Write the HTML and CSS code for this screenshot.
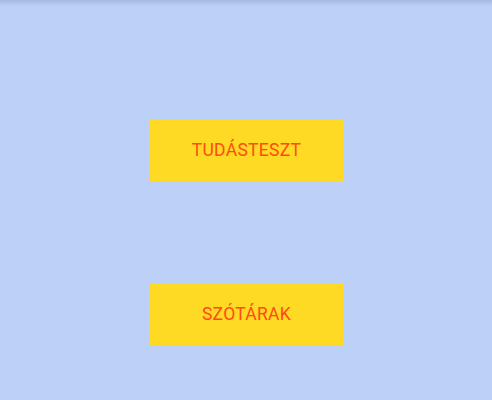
FILE: index.html
```html
<!DOCTYPE html>
<html>
<head>
<meta charset="utf-8">
<link rel="stylesheet" href="styles.css">
</head>
<body>
<div class="screen">
  <div class="shadow"></div>
  <div class="menu">
    <div class="btn">TUDÁSTESZT</div>
    <div class="btn">SZÓTÁRAK</div>
  </div>
</div>
</body>
</html>
```
FILE: styles.css
```css
html, body {
  margin: 0;
  padding: 0;
}
body {
  width: 492px;
  height: 400px;
  overflow: hidden;
  background: #bdd1f8;
  font-family: Roboto, "Liberation Sans", sans-serif;
}
.screen {
  position: relative;
  width: 492px;
  height: 400px;
}
.shadow {
  position: absolute;
  left: 0;
  top: 0;
  width: 100%;
  height: 6px;
  background: linear-gradient(to bottom, rgba(120,140,180,0.35), rgba(120,140,180,0));
}
.menu {
  display: flex;
  flex-direction: column;
  align-items: center;
  padding-top: 119px;
  gap: 102px;
  padding-left: 1px;
}
.btn {
  width: 193px;
  height: 62px;
  background: #ffda25;
  color: #ff4a10;
  font-size: 17.5px;
  display: flex;
  align-items: center;
  justify-content: center;
  letter-spacing: 0.3px;
}
```
